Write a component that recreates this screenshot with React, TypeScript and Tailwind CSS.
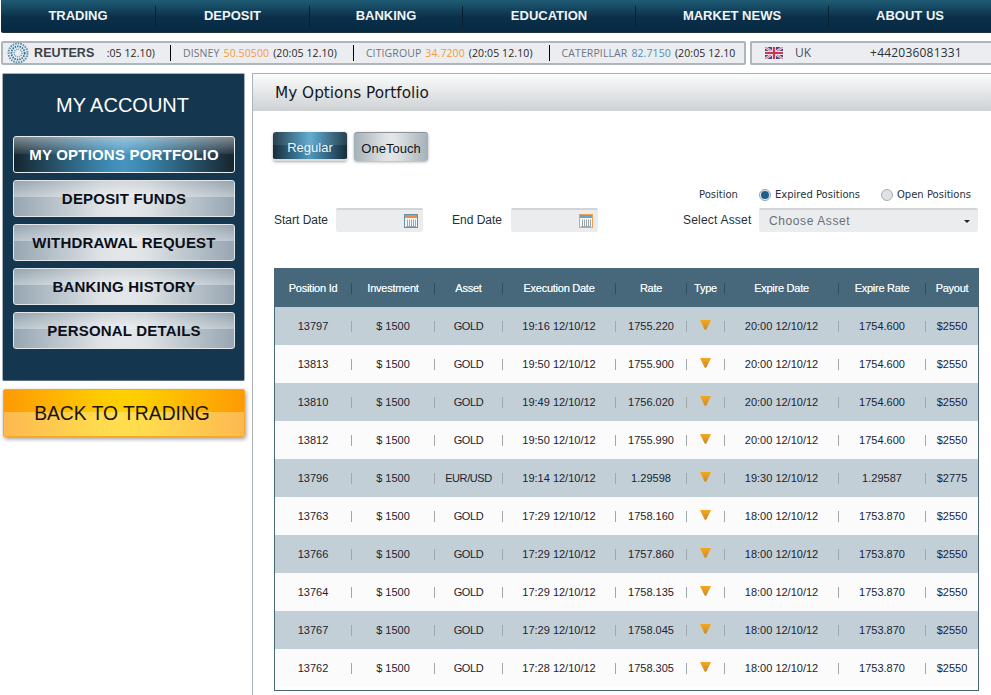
const navItems = [
  { label: "TRADING", w: "w-[155px]" },
  { label: "DEPOSIT", w: "w-[154px]" },
  { label: "BANKING", w: "w-[153px]" },
  { label: "EDUCATION", w: "w-[173px]" },
  { label: "MARKET NEWS", w: "w-[193px]" },
  { label: "ABOUT US", w: "flex-1" },
];

const menu = ["MY OPTIONS PORTFOLIO", "DEPOSIT FUNDS", "WITHDRAWAL REQUEST", "BANKING HISTORY", "PERSONAL DETAILS"];

const widths = ["w-[76px]", "w-[82px]", "w-[67px]", "w-[112px]", "w-[70px]", "w-[37px]", "w-[113px]", "w-[86px]", "flex-1"];

const headers = ["Position Id", "Investment", "Asset", "Execution Date", "Rate", "Type", "Expire Date", "Expire Rate", "Payout"];

const rows = [
  ["13797", "$ 1500", "GOLD", "19:16 12/10/12", "1755.220", "20:00 12/10/12", "1754.600", "$2550"],
  ["13813", "$ 1500", "GOLD", "19:50 12/10/12", "1755.900", "20:00 12/10/12", "1754.600", "$2550"],
  ["13810", "$ 1500", "GOLD", "19:49 12/10/12", "1756.020", "20:00 12/10/12", "1754.600", "$2550"],
  ["13812", "$ 1500", "GOLD", "19:50 12/10/12", "1755.990", "20:00 12/10/12", "1754.600", "$2550"],
  ["13796", "$ 1500", "EUR/USD", "19:14 12/10/12", "1.29598", "19:30 12/10/12", "1.29587", "$2775"],
  ["13763", "$ 1500", "GOLD", "17:29 12/10/12", "1758.160", "18:00 12/10/12", "1753.870", "$2550"],
  ["13766", "$ 1500", "GOLD", "17:29 12/10/12", "1757.860", "18:00 12/10/12", "1753.870", "$2550"],
  ["13764", "$ 1500", "GOLD", "17:29 12/10/12", "1758.135", "18:00 12/10/12", "1753.870", "$2550"],
  ["13767", "$ 1500", "GOLD", "17:29 12/10/12", "1758.045", "18:00 12/10/12", "1753.870", "$2550"],
  ["13762", "$ 1500", "GOLD", "17:28 12/10/12", "1758.305", "18:00 12/10/12", "1753.870", "$2550"],
];

function ReutersLogo() {
  return (
    <svg width="22" height="22" viewBox="0 0 22 22" fill="none" className="shrink-0">
      <circle cx="11" cy="11" r="9.5" stroke="#5f93ad" strokeWidth="2" strokeDasharray="1.6 1" />
      <circle cx="11" cy="11" r="6.6" stroke="#2f6f93" strokeWidth="1.8" strokeDasharray="1.5 1" />
      <circle cx="11" cy="11" r="3.9" stroke="#6fa3bd" strokeWidth="1.4" strokeDasharray="1.2 0.8" />
    </svg>
  );
}

function UkFlag() {
  return (
    <svg width="18" height="12" viewBox="0 0 18 12" className="shrink-0">
      <rect width="18" height="12" fill="#3d4a86" />
      <path d="M0 0L18 12M18 0L0 12" stroke="#f1dfe2" strokeWidth="2.4" />
      <path d="M0 0L18 12M18 0L0 12" stroke="#c5506a" strokeWidth="0.8" />
      <path d="M9 0V12M0 6H18" stroke="#f1dfe2" strokeWidth="4" />
      <path d="M9 0V12M0 6H18" stroke="#c8385c" strokeWidth="2.2" />
    </svg>
  );
}

function CalendarIcon({ top, frame }: { top: string; frame: string }) {
  return (
    <svg width="14" height="14" viewBox="0 0 14 14" className="shrink-0">
      <rect x="0.5" y="0.5" width="13" height="13" fill="#f4f6f7" stroke={frame} />
      <rect x="1" y="1" width="12" height="3" fill={top} />
      <path d="M3.5 5.5V12M5.5 5.5V12M7.5 5.5V12M9.5 5.5V12M11.5 5.5V12" stroke="#9aa7ae" strokeWidth="1" />
      <path d="M2 12.5H12" stroke="#9aa7ae" strokeWidth="1" />
    </svg>
  );
}

function TypeArrow() {
  return (
    <svg width="11" height="10" viewBox="0 0 11 10" className="mb-[3px]">
      <defs>
        <linearGradient id="arrowFill" x1="0" y1="0" x2="0" y2="1">
          <stop offset="0" stopColor="#f7a81c" />
          <stop offset="1" stopColor="#c98a2a" />
        </linearGradient>
      </defs>
      <path d="M0 0H11L6.4 9.4Q5.5 10 4.6 9.4Z" fill="url(#arrowFill)" />
    </svg>
  );
}

function Ticker({ name, price, priceColor }: { name: string; price: string; priceColor: string }) {
  return (
    <div className="flex items-center shrink-0 whitespace-nowrap">
      <div className="w-px h-4 bg-black mr-[12px]" />
      <span className="text-[#6c7580] pt-[2px]">{name}</span>
      <span className={`ml-1 pt-[2px] ${priceColor}`}>{price}</span>
      <span className="ml-1 pt-[2px] text-[#26292c]">(20:05 12.10)</span>
    </div>
  );
}

function TableRow({ cells, odd }: { cells: string[]; odd: boolean }) {
  return (
    <div className={`flex items-center h-[38px] text-[11px] text-[#1c2430] ${odd ? "bg-[#c2cfd7]" : "bg-[#fbfbfb]"}`}>
      {widths.map((w, i) => {
        const value = i === 5 ? null : cells[i > 5 ? i - 1 : i];
        return (
          <div key={i} className={`flex items-center ${w === "flex-1" ? "flex-1" : ""}`}>
            <div className={`${w} flex justify-center items-center ${i === 2 ? "tracking-[-0.4px]" : ""}`}>
              {value === null ? <TypeArrow /> : value}
            </div>
            {i < 8 && <div className="w-px h-[11px] bg-[#9fa8ad]" />}
          </div>
        );
      })}
    </div>
  );
}

export default function App() {
  return (
    <div className="w-[991px] h-[695px] overflow-hidden bg-white font-['Liberation_Sans',Arial,sans-serif]">
      {/* top nav */}
      <div className="ml-[1px] h-[33px] flex items-center rounded-bl-[2px] bg-[linear-gradient(#1f5c75,#0b2f49_55%,#062a42)] border-b border-[#23343f]">
        {navItems.map((item, i) => (
          <div key={item.label} className={`flex items-center ${item.w}`}>
            <div className="flex-1 text-center text-[13px] text-[#f0f4f6] [font-weight:600]">{item.label}</div>
            {i < 5 && <div className="w-px h-[21px] bg-[#06202f]" />}
          </div>
        ))}
      </div>

      {/* ticker row */}
      <div className="flex mt-[8px] ml-[1px] h-[24px]">
        <div className="w-[745px] flex items-center border-2 border-[#aeb5bb] rounded-[2px] bg-[#ebedf0] pl-[4px] text-[10.5px] tracking-[0.1px] font-['Open_Sans','Liberation_Sans',sans-serif]">
          <ReutersLogo />
          <span className="ml-[5px] w-[61px] shrink-0 text-[12.5px] font-bold text-[#3c4146] font-['Liberation_Sans',sans-serif]">REUTERS</span>
          <div className="flex flex-1 items-center overflow-hidden ml-[4px]">
            <div className="w-[56px] shrink-0 flex justify-end whitespace-nowrap pt-[2px] text-[#26292c] mr-[15px]">:05 12.10)</div>
            <div className="shrink-0 mr-[16px]">
              <Ticker name="DISNEY" price="50.50500" priceColor="text-[#f59a3c]" />
            </div>
            <div className="shrink-0 mr-[16px]">
              <Ticker name="CITIGROUP" price="34.7200" priceColor="text-[#f59a3c]" />
            </div>
            <div className="flex items-center shrink-0 whitespace-nowrap">
              <div className="w-px h-4 bg-black mr-[12px]" />
              <span className="text-[#6c7580] pt-[2px]">CATERPILLAR</span>
              <span className="ml-1 pt-[2px] text-[#4f8fb5]">82.7150</span>
              <span className="ml-1 pt-[2px] text-[#26292c]">(20:05 12.10</span>
            </div>
          </div>
        </div>
        <div className="ml-[4px] flex-1 flex items-center border-2 border-r-0 border-[#aeb5bb] rounded-l-[2px] bg-[#ebedf0] pl-[13px] text-[12px] text-[#2b3138] font-['Open_Sans',sans-serif]">
          <UkFlag />
          <span className="ml-[12px] text-[#4a525a]">UK</span>
          <span className="ml-[59px] tracking-[0.2px]">+442036081331</span>
        </div>
      </div>

      {/* body */}
      <div className="flex mt-[8px]">
        <div className="w-[252px] pl-[2px] shrink-0">
          <div className="w-[243px] h-[308px] rounded-[2px] bg-[#14374f] border border-[#a5b2bb] border-b-[#5a7283] pt-[19px] pl-[10px] pr-[9px]">
            <div className="text-center text-[20px] text-white leading-[24px] pr-[3px]">MY ACCOUNT</div>
            <div className="mt-[19px] flex flex-col gap-[7px]">
              {menu.map((m, i) => (
                <div
                  key={m}
                  className={
                    i === 0
                      ? "h-[37px] pt-[1px] rounded-[3px] border border-[#e8ecef] flex items-center justify-center text-[15px] tracking-[0.2px] font-bold text-white bg-[linear-gradient(rgba(255,255,255,0.45),rgba(255,255,255,0.06)_50%,rgba(255,255,255,0)_50%),linear-gradient(90deg,#16252f,#3a85ac_40%,#4695c0_50%,#3a85ac_60%,#16252f)]"
                      : "h-[37px] pt-[1px] rounded-[3px] border border-[#e3e7ea] flex items-center justify-center text-[15px] tracking-[0.2px] font-bold text-[#0b0f1a] bg-[linear-gradient(rgba(140,150,155,0.2),rgba(255,255,255,0.35)_46%,rgba(255,255,255,0)_46%),linear-gradient(90deg,#96a6b2,#dfe3e6_40%,#e4e7e9_50%,#dfe3e6_60%,#96a6b2)]"
                  }
                >
                  {m}
                </div>
              ))}
            </div>
          </div>
          <div className="mt-[8px] ml-[1px] w-[242px] h-[48px] pt-[2px] pr-[4px] rounded-[2px] border border-[#f5a623] shadow-[1px_2px_4px_rgba(0,0,0,0.4)] flex items-center justify-center text-[19.3px] text-[#1a1405] bg-[linear-gradient(rgba(255,255,255,0)_47%,rgba(255,255,255,0.3)_47%),linear-gradient(90deg,#fd9a05,#ffcb00_40%,#ffd000_50%,#ffcb00_60%,#fd9a05)]">
            BACK TO TRADING
          </div>
        </div>

        <div className="flex-1 h-[622px] border-l border-[#aab4ba]">
          <div className="h-[38px] border-t border-[#a8b0b5] bg-[linear-gradient(#fbfcfc,#ced2d4)] flex items-center pl-[22px] pt-[1px] text-[15.3px] text-[#15181c] font-['DejaVu_Sans',sans-serif]">
            My Options Portfolio
          </div>

          <div className="pl-[20px]">
            {/* tabs */}
            <div className="flex gap-[7px] mt-[21px]">
              <div className="w-[74px] h-[29px] pt-[4px] rounded-[3px] border-b-2 border-[#d7dcdf] shadow-[0_1px_3px_rgba(0,0,0,0.35)] flex items-center justify-center text-[13px] text-[#f1f5f8] bg-[linear-gradient(rgba(255,255,255,0.08)_50%,rgba(0,0,0,0.08)_50%),linear-gradient(90deg,#16303f,#4a94ba_42%,#5aa5cb_50%,#4a94ba_58%,#16303f)]">
                Regular
              </div>
              <div className="w-[74px] h-[29px] pt-[3px] rounded-[3px] border-t border-[#8d9499] shadow-[0_1px_3px_rgba(0,0,0,0.35)] flex items-center justify-center text-[13px] text-[#101620] bg-[linear-gradient(90deg,#a4b0b8,#dfe2e4_42%,#e4e6e8_50%,#dfe2e4_58%,#a4b0b8)]">
                OneTouch
              </div>
            </div>

            {/* filters */}
            <div className="flex mt-[23px] h-[48px] items-end">
              <div className="flex items-center h-[24px] text-[12px] text-[#24303c] pl-[1px]">
                <span className="w-[62px]">Start Date</span>
                <div className="w-[87px] h-[24px] rounded-[2px] bg-[#eaecee] border-t-2 border-[#d2d5d8] flex items-center justify-end pr-[5px]">
                  <CalendarIcon top="#f08c3c" frame="#5f93ad" />
                </div>
                <span className="ml-[29px] w-[59px]">End Date</span>
                <div className="w-[87px] h-[24px] rounded-[2px] bg-[#eaecee] border-t-2 border-[#d2d5d8] flex items-center justify-end pr-[5px]">
                  <CalendarIcon top="#6fa3bd" frame="#f0a050" />
                </div>
              </div>
              <div className="ml-[85px] w-[295px] text-[#24303c]">
                <div className="flex items-center h-[20px] pt-[1px] mb-[4px] text-[10px] font-['DejaVu_Sans',sans-serif]">
                  <span className="w-[76px] pl-[16px]">Position</span>
                  <span className="w-[12px] h-[12px] rounded-full border border-[#9aa3a9] bg-[#e9edf0] flex items-center justify-center">
                    <span className="w-[8px] h-[8px] rounded-full bg-[#1f5f8b]" />
                  </span>
                  <span className="ml-[4px] w-[106px] whitespace-nowrap">Expired Positions</span>
                  <span className="w-[12px] h-[12px] rounded-full border border-[#a5adb2] bg-[#dfe2e4]" />
                  <span className="ml-[4px] whitespace-nowrap">Open Positions</span>
                </div>
                <div className="flex items-center h-[24px]">
                  <span className="w-[76px] text-[12px] tracking-[0.2px]">Select Asset</span>
                  <div className="w-[219px] h-[24px] rounded-[2px] bg-[#eaecee] border-t-2 border-[#d2d5d8] flex items-center justify-between pl-[10px] pr-[8px] text-[12px] tracking-[0.6px] text-[#6a6f75]">
                    Choose Asset
                    <svg width="6" height="3" viewBox="0 0 6 3">
                      <path d="M0 0H6L3 3Z" fill="#222" />
                    </svg>
                  </div>
                </div>
              </div>
            </div>

            {/* portfolio table */}
            <div className="mt-[36px] ml-[1px] w-[705px] h-[423px] border border-t-0 border-[#46687a]">
              <div className="flex items-center h-[39px] pt-[1px] bg-[#46687a] text-[11px] tracking-[-0.25px] text-[#eef3f6] [text-shadow:0_0_0.6px_#eef3f6]">
                {widths.map((w, i) => (
                  <div key={headers[i]} className={`flex items-center ${w === "flex-1" ? "flex-1" : ""}`}>
                    <div className={`${w} flex justify-center`}>{headers[i]}</div>
                    {i < 8 && <div className="w-px h-[11px] bg-[#2f4c5c]" />}
                  </div>
                ))}
              </div>
              {rows.map((r, i) => (
                <TableRow key={r[0]} cells={r} odd={i % 2 === 0} />
              ))}
            </div>
          </div>
        </div>
      </div>
    </div>
  );
}
